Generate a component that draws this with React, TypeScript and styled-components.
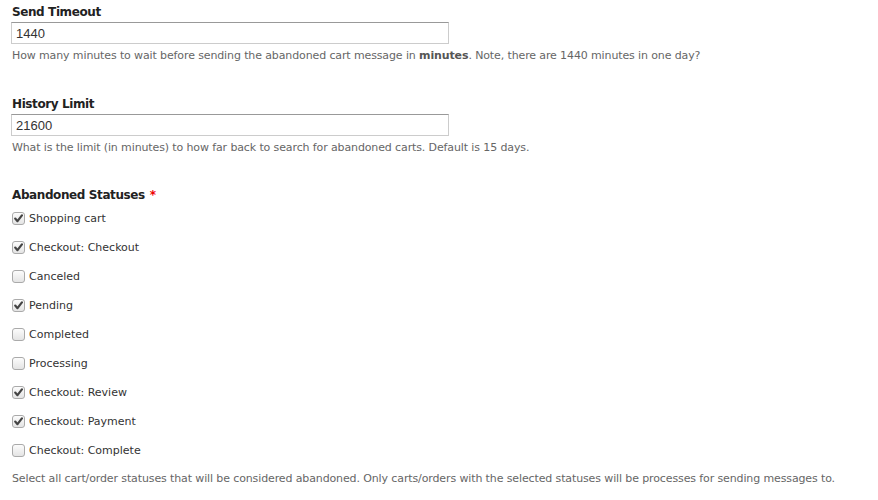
import React from "react";
import styled, { createGlobalStyle } from "styled-components";

const Global = createGlobalStyle`
  html, body { margin: 0; padding: 0; background: #fff; }
  body { font-family: "DejaVu Sans", Verdana, sans-serif; color: #333; }
`;

const Page = styled.div`
  padding: 4px 12px 0 12px;
  display: flex;
  flex-direction: column;
`;

const Field = styled.div<{ $gap?: number }>`
  display: flex;
  flex-direction: column;
  margin-bottom: ${(p) => p.$gap ?? 0}px;
`;

const Label = styled.div`
  font-size: 12px;
  font-weight: bold;
  color: #222;
  line-height: 16px;
  letter-spacing: -0.4px;
  margin-bottom: 2px;
`;

const Req = styled.span`
  color: #e00;
  margin-left: 5px;
`;

const Input = styled.input`
  box-sizing: border-box;
  width: 438px;
  height: 22px;
  margin: 0 0 0 -1px;
  padding: 2px 4px;
  border: 1px solid #ccc;
  border-top-color: #999;
  font-family: "Liberation Sans", Arial, sans-serif;
  font-size: 13px;
  color: #333;
  outline: none;
`;

const Desc = styled.div<{ $top?: number }>`
  font-size: 11px;
  color: #666;
  line-height: 14px;
  letter-spacing: -0.12px;
  margin-top: ${(p) => p.$top ?? 5}px;
  b { color: #555; }
`;

const List = styled.div`
  display: flex;
  flex-direction: column;
  margin-top: -1px;
`;

const Row = styled.label`
  display: flex;
  align-items: center;
  height: 29px;
  font-size: 11px;
  color: #333;
`;

const Box = styled.span<{ $checked: boolean }>`
  box-sizing: border-box;
  width: 13px;
  height: 13px;
  border: 1px solid #aaa;
  border-radius: 3px;
  background: linear-gradient(#fcfcfc, #e4e4e4);
  display: inline-flex;
  align-items: center;
  justify-content: center;
  margin-right: 4px;
  flex: none;
`;

const Check = () => (
  <svg width="9" height="9" viewBox="0 0 9 9">
    <path d="M1.2 4.6 L3.5 7.2 L7.9 1.4" fill="none" stroke="#444" strokeWidth="2.2" strokeLinecap="round" strokeLinejoin="round" />
  </svg>
);

const statuses: [string, boolean][] = [
  ["Shopping cart", true],
  ["Checkout: Checkout", true],
  ["Canceled", false],
  ["Pending", true],
  ["Completed", false],
  ["Processing", false],
  ["Checkout: Review", true],
  ["Checkout: Payment", true],
  ["Checkout: Complete", false],
];

export default function App() {
  return (
    <>
      <Global />
      <Page>
        <Field $gap={33}>
          <Label>Send Timeout</Label>
          <Input defaultValue="1440" />
          <Desc>
            How many minutes to wait before sending the abandoned cart message in <b>minutes</b>. Note, there are 1440 minutes in one day?
          </Desc>
        </Field>
        <Field $gap={32}>
          <Label>History Limit</Label>
          <Input defaultValue="21600" />
          <Desc>What is the limit (in minutes) to how far back to search for abandoned carts. Default is 15 days.</Desc>
        </Field>
        <Field>
          <Label>
            Abandoned Statuses<Req>*</Req>
          </Label>
          <List>
            {statuses.map(([name, checked]) => (
              <Row key={name}>
                <Box $checked={checked}>{checked && <Check />}</Box>
                {name}
              </Row>
            ))}
          </List>
          <Desc $top={7}>
            Select all cart/order statuses that will be considered abandoned. Only carts/orders with the selected statuses will be processes for sending messages to.
          </Desc>
        </Field>
      </Page>
    </>
  );
}
